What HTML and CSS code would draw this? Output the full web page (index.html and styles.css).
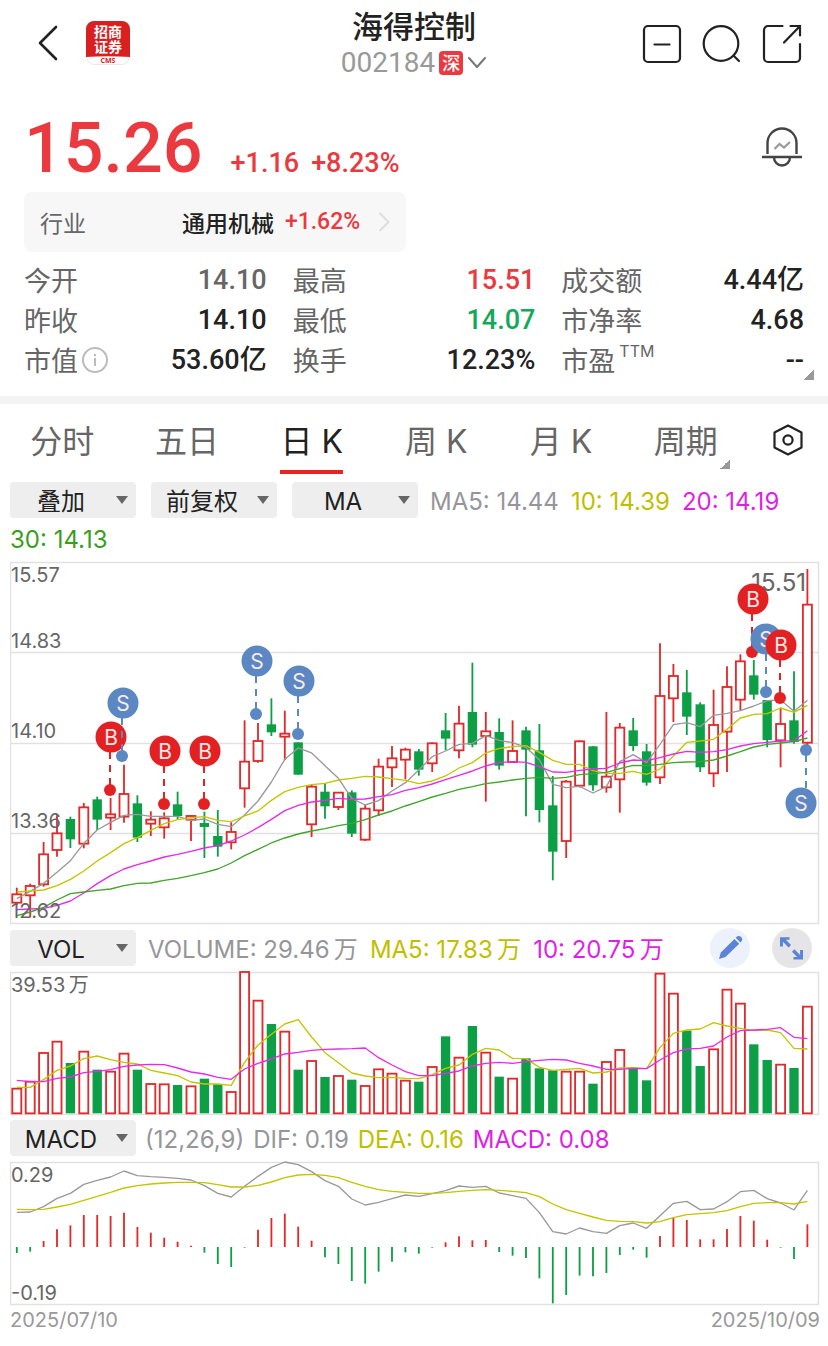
FILE: index.html
```html
<!DOCTYPE html>
<html lang="zh-CN">
<head>
<meta charset="utf-8">
<meta name="viewport" content="width=device-width, initial-scale=1">
<title>海得控制 002184</title>
<link rel="stylesheet" href="styles.css">
</head>
<body>
<header class="topbar">
  <div class="topbar-side">
    <button class="icon-btn back" aria-label="返回">
      <svg width="20" height="36" viewBox="0 0 20 36" fill="none" stroke="#222" stroke-width="2.6" stroke-linecap="round" stroke-linejoin="round"><path d="M18 2 2 18l16 16"/></svg>
    </button>
    <svg class="broker" width="44" height="44" viewBox="0 0 44 44" role="img" aria-label="招商证券">
      <rect x=".5" y=".5" width="43" height="43" rx="8" fill="#fff" stroke="#e6e6e6"/>
      <path d="M0 36V8a8 8 0 0 1 8-8h28a8 8 0 0 1 8 8v28Q22 34.500 0 36Z" fill="#d92021"/>
      <text class="broker-name" x="22" y="16">招商</text>
      <text class="broker-name" x="22" y="31">证券</text>
      <text class="broker-en" x="22" y="42">CMS</text>
    </svg>
  </div>
  <div class="topbar-title">
    <h1>海得控制</h1>
    <button class="code"><span>002184</span><span class="market">深</span><svg width="20" height="12" viewBox="0 0 20 12" fill="none" stroke="#777" stroke-width="2" stroke-linecap="round" stroke-linejoin="round"><path d="m2 1 8 9 8-9"/></svg></button>
  </div>
  <div class="topbar-side actions">
    <button class="icon-btn" aria-label="删除自选">
      <svg width="40" height="40" viewBox="0 0 40 40" fill="none" stroke="#222" stroke-width="2.200" stroke-linecap="round"><rect x="2" y="2" width="36" height="36" rx="4"/><path d="M12.500 20.500h15"/></svg>
    </button>
    <button class="icon-btn" aria-label="搜索">
      <svg width="40" height="40" viewBox="0 0 40 40" fill="none" stroke="#222" stroke-width="2.200" stroke-linecap="round"><circle cx="19" cy="19.500" r="17.300"/><path d="m31.500 31.500 5.500 5.500"/></svg>
    </button>
    <button class="icon-btn" aria-label="分享">
      <svg width="40" height="40" viewBox="0 0 40 40" fill="none" stroke="#222" stroke-width="2.200" stroke-linecap="round"><path d="M20.500 2H6a4 4 0 0 0-4 4v28a4 4 0 0 0 4 4h28a4 4 0 0 0 4-4V20"/><path d="M28.500 2H38v9.500M38 2 22 18.500"/></svg>
    </button>
  </div>
</header>

<main>
  <section class="quote">
    <div class="price-row">
      <strong class="price">15.26</strong>
      <span class="change">+1.16</span>
      <span class="change">+8.23%</span>
      <button class="icon-btn bell" aria-label="股价提醒">
        <svg width="40" height="40" viewBox="0 0 40 40" fill="none" stroke="#444" stroke-width="2.400"><path d="M5.500 27V16a14.500 14.500 0 0 1 29 0v11M0 30h40M12 30.500a8 8 0 0 0 16 0"/><path d="m12.500 22 5-5 4.500 3.500 6-5.500" stroke="#999" stroke-width="2.200"/></svg>
      </button>
    </div>
    <button class="industry">
      <span class="industry-label">行业</span>
      <span class="industry-name">通用机械</span>
      <span class="industry-change">+1.62%</span>
      <svg width="12" height="22" viewBox="0 0 12 22" fill="none" stroke="#ddd" stroke-width="2"><path d="m1.500 2 9 9-9 9"/></svg>
    </button>
    <dl class="stats">
      <div><dt>今开</dt><dd class="flat">14.10</dd></div>
      <div><dt>最高</dt><dd class="up">15.51</dd></div>
      <div><dt>成交额</dt><dd>4.44亿</dd></div>
      <div><dt>昨收</dt><dd>14.10</dd></div>
      <div><dt>最低</dt><dd class="down">14.07</dd></div>
      <div><dt>市净率</dt><dd>4.68</dd></div>
      <div><dt>市值<svg class="info" width="26" height="26" viewBox="0 0 26 26" fill="none" stroke="#bbb" stroke-width="2"><circle cx="13" cy="13" r="12"/><path d="M13 11v8M13 7v2.200"/></svg></dt><dd>53.60亿</dd></div>
      <div><dt>换手</dt><dd>12.23%</dd></div>
      <div class="more"><dt>市盈<sup>TTM</sup></dt><dd>--</dd></div>
    </dl>
  </section>

  <nav class="tabs">
    <button>分时</button>
    <button>五日</button>
    <button class="active">日 K</button>
    <button>周 K</button>
    <button>月 K</button>
    <button class="more">周期</button>
    <button class="icon-btn" aria-label="设置">
      <svg width="32" height="32" viewBox="0 0 32 32" fill="none" stroke="#222" stroke-width="2.200" stroke-linejoin="round"><path d="M16 1.500 29.500 8.500v15L16 30.500 2.500 23.500v-15Z"/><circle cx="16" cy="16" r="4.600"/></svg>
    </button>
  </nav>

  <section class="panel">
    <div class="toolbar">
      <label class="pick"><select aria-label="叠加"><option>叠加</option></select></label>
      <label class="pick"><select aria-label="复权"><option>前复权</option></select></label>
      <label class="pick"><select aria-label="均线"><option>MA</option></select></label>
      <span class="c-gray">MA5: 14.44</span>
      <span class="c-yellow">10: 14.39</span>
      <span class="c-pink">20: 14.19</span>
      <span class="c-green">30: 14.13</span>
    </div>
    <svg class="chart" id="price" viewBox="0 0 810 366" role="img" aria-label="日K线"></svg>
    <div class="toolbar tall">
      <label class="pick"><select aria-label="副图一"><option>VOL</option></select></label>
      <span class="c-gray">VOLUME: 29.46&thinsp;万</span>
      <span class="c-yellow">MA5: 17.83&thinsp;万</span>
      <span class="c-pink">10: 20.75&thinsp;万</span>
      <div class="round-actions">
        <button class="round pen" aria-label="画线">
          <svg width="40" height="40" viewBox="0 0 40 40" fill="#5b84d6"><path d="m9 31 1.800-6.500L24.500 11l4.700 4.700L15.500 29ZM25.700 9.800l.7-.7a3.300 3.300 0 0 1 4.700 4.700l-.7.7Z"/></svg>
        </button>
        <button class="round" aria-label="全屏">
          <svg width="40" height="40" viewBox="0 0 40 40" fill="#5b84d6"><path d="M8 9.200h9.500v2.600h-3.700l5.200 5.200-2.400 2.400-5.700-5.700v4.800H8ZM31 31.500h-9.500v-2.600h3.700L20 23.700l2.400-2.400 5.700 5.700v-5H31Z"/></svg>
        </button>
      </div>
    </div>
    <svg class="chart" id="volume" viewBox="0 0 810 148" role="img" aria-label="成交量"></svg>
    <div class="toolbar macd">
      <label class="pick"><select aria-label="副图二"><option>MACD</option></select></label>
      <span class="c-gray">(12,26,9)</span>
      <span class="c-gray">DIF: 0.19</span>
      <span class="c-yellow">DEA: 0.16</span>
      <span class="c-pink">MACD: 0.08</span>
    </div>
    <svg class="chart" id="macd" viewBox="0 0 810 148" role="img" aria-label="MACD"></svg>
    <div class="dates"><time>2025/07/10</time><time>2025/10/09</time></div>
  </section>
</main>
<script src="chart.js"></script>
</body>
</html>
```

FILE: styles.css
```css
* { box-sizing: border-box; }
body {
  margin: 0;
  background: #fff;
  color: #222;
  font-family: Inter, "Noto Sans CJK SC", sans-serif;
}
button {
  padding: 0;
  border: 0;
  background: none;
  color: inherit;
  font: inherit;
}
svg { display: block; }

/* top bar */
.topbar {
  display: grid;
  grid-template-columns: 1fr auto 1fr;
  align-items: center;
  height: 88px;
  padding: 0 26px 0 38px;
}
.topbar-side { display: flex; align-items: center; gap: 28px; padding-bottom: 2px; }
.actions { justify-content: flex-end; gap: 20px; padding-bottom: 0; }
.broker-name {
  fill: #fff;
  font: 700 14px "Noto Sans CJK SC", sans-serif;
  text-anchor: middle;
}
.broker-en {
  fill: #d92021;
  font: 700 7px "Open Sans", sans-serif;
  text-anchor: middle;
}
.topbar-title { display: flex; flex-direction: column; align-items: center; padding-right: 12px; }
h1 {
  margin: 0;
  font: 500 31px/38px "Noto Sans CJK SC", sans-serif;
}
.code {
  display: flex;
  align-items: center;
  gap: 4px;
  color: #999;
  font: 400 28px/38px Roboto, sans-serif;
}
.market {
  width: 24px;
  height: 24px;
  border-radius: 4px;
  background: #ea3a40;
  color: #fff;
  font: 500 18px/23px "Noto Sans CJK SC", sans-serif;
  text-align: center;
}

/* quote */
.quote { padding: 14px 24px; border-bottom: 8px solid #f3f3f3; }
.price-row { display: flex; align-items: baseline; height: 90px; color: #ea3a40; }
.price { margin-right: 28px; font: 500 70px/92px Roboto, sans-serif; }
.change { margin-right: 12px; font: 500 27px/36px Roboto, sans-serif; }
.bell { align-self: center; margin-left: auto; margin-right: 2px; }
.industry {
  display: flex;
  align-items: center;
  width: 49%;
  height: 60px;
  padding: 0 16px;
  border-radius: 8px;
  background: #f7f7f7;
  font: 400 23px/34px "Noto Sans CJK SC", sans-serif;
}
.industry-label { margin-right: auto; color: #666; }
.industry-name { font-weight: 500; }
.industry-change { margin: 0 18px 0 11px; color: #ea3a40; font: 500 23px/34px Roboto, sans-serif; }
.stats {
  display: grid;
  grid-template-columns: repeat(3, 1fr);
  column-gap: 26px;
  margin: 8px 0 2px;
}
.stats div { display: flex; justify-content: space-between; line-height: 40px; }
.stats dt {
  display: flex;
  align-items: center;
  gap: 4px;
  color: #666;
  font: 400 27px/40px "Noto Sans CJK SC", sans-serif;
}
.stats dd { margin: 0; font: 500 27px/40px Roboto, "Noto Sans CJK SC", sans-serif; }
.stats .flat { color: #666; }
.stats .up { color: #ea3a40; }
.stats .down { color: #14a85a; }
.stats sup { align-self: flex-start; font: 400 16px/22px Inter, sans-serif; }
.more { position: relative; }
.more::after {
  content: "";
  position: absolute;
  right: -10px;
  bottom: 0;
  width: 10px;
  height: 10px;
  background: linear-gradient(135deg, transparent 50%, #999 50%);
}

/* period tabs */
.tabs {
  display: grid;
  grid-template-columns: repeat(6, 1fr) 80px;
  justify-items: center;
  align-items: center;
  height: 72px;
  color: #666;
  font: 400 32px/64px Inter, "Noto Sans CJK SC", sans-serif;
}
.tabs button { margin-top: 4px; }
.tabs .icon-btn { margin-top: 0; }
.tabs .active { color: #222; box-shadow: inset 0 -4px #e92425; }
.tabs .more::after { right: -12px; bottom: 5px; }

/* indicator rows */
.panel { padding: 6px 8px 8px 10px; }
.toolbar {
  display: flex;
  flex-wrap: wrap;
  align-items: center;
  gap: 2px 12px;
  font: 400 24px/33px Inter, "Noto Sans CJK SC", sans-serif;
}
.toolbar span { padding-top: 3px; white-space: nowrap; }
.pick { position: relative; display: block; }
.pick + .pick { margin-left: 3px; }
.pick select {
  display: block;
  appearance: none;
  width: 126px;
  height: 36px;
  padding: 3px 24px 0 0;
  border: 0;
  border-radius: 4px;
  background: #eee;
  color: #222;
  font: 400 24px/33px Inter, "Noto Sans CJK SC", sans-serif;
  text-align: center;
  text-align-last: center;
}
.pick::after {
  content: "";
  position: absolute;
  right: 8px;
  top: 14px;
  border: solid transparent;
  border-width: 8px 6px 0;
  border-top-color: #666;
  pointer-events: none;
}
.tall { height: 40px; }
.macd { column-gap: 9px; }
.c-gray { color: #96969a; }
.c-yellow { color: #bfbf00; }
.c-pink { color: #e01fe6; }
.c-green { color: #3a9d20; }
.round-actions { display: flex; gap: 22px; margin: 0 8px 0 auto; }
.round { border-radius: 50%; background: #e5e5e7; }
.pen { background: #ecf1fb; }

/* charts */
.chart { width: 100%; height: auto; }
#price { margin: 4px 0 2px; }
#volume { margin: 2px 0; }
#macd { margin-top: 4px; }
.frame { fill: none; stroke: #e1e1e3; stroke-width: 1.5; }
.rise { fill: #fff; stroke: #e02a2b; stroke-width: 5.5; }
.fall { fill: #0d9f46; stroke: none; }
.wick-rise { stroke: #e02a2b; stroke-width: 5.5; }
.wick-fall { stroke: #0d9f46; stroke-width: 5.5; }
.line { fill: none; stroke-width: 4; stroke-linejoin: round; }
.l-gray { stroke: #99999c; }
.l-yellow { stroke: #c4c400; }
.l-pink { stroke: #e52bea; }
.l-green { stroke: #41a52a; }
.axis { fill: #666; font: 400 20px Inter, "Noto Sans CJK SC", sans-serif; }
.peak { fill: #666; font: 400 24px Inter, sans-serif; text-anchor: end; }
.mark-b { fill: #e32122; stroke: #e32122; }
.mark-s { fill: #5b87c3; stroke: #5b87c3; }
.mark circle { stroke: none; }
.mark line { stroke-width: 2; stroke-dasharray: 7 6; }
.mark text {
  fill: #fbe9e9;
  stroke: none;
  font: 400 21px Inter, sans-serif;
  text-anchor: middle;
}
.dates {
  display: flex;
  justify-content: space-between;
  color: #999;
  font: 400 20px/24px Inter, sans-serif;
}
```

FILE: chart.js
```js
// Plot units are thirds of a pixel; one trading day is 40.2 units wide.
const X0 = 50.4, STEP = 40.2;
const x = i => X0 + i * STEP;

// high, body top, body bottom, low, rising?
const days = [
[983,1003,1028,1035,1],[971,978,1006,1072,1],[846,883,973,980,1],[762,820,870,890,1],[770,777,838,864,0],
[729,742,851,865,1],[710,718,779,810,0],[714,763,773,810,1],[614,702,770,788,1],[706,730,833,846,0],
[754,779,791,828,1],[757,775,802,836,1],[695,733,768,777,0],[765,768,779,843,1],[755,789,801,894,0],
[750,828,860,890,0],[787,816,847,868,1],[481,605,685,743,1],[489,543,603,608,1],[415,493,517,528,0],
[452,521,530,600,1],[547,547,644,644,0],[675,680,793,831,1],[670,695,739,776,0],[697,698,741,750,1],
[691,697,821,831,0],[735,746,839,843,1],[596,620,751,768,1],[558,595,622,681,1],[563,569,599,658,1],
[567,574,629,647,0],[547,550,610,636,1],[459,511,536,571,0],[437,491,571,595,1],[308,456,554,562,0],
[456,514,528,725,1],[475,516,617,629,0],[481,573,606,608,1],[500,511,569,769,0],[492,571,750,787,0],
[648,736,875,961,0],[660,665,843,894,1],[541,544,677,682,1],[558,559,676,692,0],[456,650,682,698,1],
[489,503,658,758,1],[474,511,558,573,0],[552,574,668,677,0],[250,408,652,672,1],[312,348,415,486,1],
[330,397,470,525,0],[427,433,622,636,0],[389,495,640,681,1],[319,381,515,636,1],[283,304,419,452,1],
[300,346,404,419,0],[420,420,540,562,0],[443,492,541,622,1],[334,481,546,551,0],[27,134,548,556,1]];

const ma = {
gray: [1016,994,970,937,902,850,810,787,766,763,769,769,769,781,777,793,800,765,723,666,598,564,579,617,655,715,735,722,693,668,630,590,573,553,550,527,541,548,562,600,673,683,679,699,680,605,584,608,553,494,488,500,466,460,452,438,422,420,454,421],
yellow: [996,993,990,977,958,933,903,878,851,833,811,791,779,773,770,781,785,768,753,721,695,682,674,670,660,655,649,651,656,661,671,663,648,624,608,579,565,560,557,577,601,613,613,632,640,640,634,643,627,588,547,543,538,508,474,463,461,444,457,436],
pink: [1049,1047,1045,1036,1023,999,971,947,927,914,903,891,883,874,864,857,843,825,803,778,752,736,726,721,715,718,717,710,704,691,683,672,659,646,633,618,607,605,607,620,636,637,631,627,625,609,600,602,593,582,574,577,575,569,558,551,547,543,542,512],
green: [1067,1056,1042,1020,1001,996,991,987,977,970,969,961,955,947,938,927,909,887,868,849,834,822,813,806,797,790,779,765,753,738,725,711,700,688,680,671,666,660,655,652,655,652,644,641,637,626,616,617,613,608,606,605,600,588,575,561,553,549,545,534]
};

const vol = [491,470,384,350,414,380,434,440,386,434,477,478,480,484,461,478,501,141,227,297,320,434,408,456,453,464,483,433,446,467,470,426,334,398,303,383,455,461,400,430,436,440,440,476,411,375,431,466,146,206,317,423,373,194,236,358,405,419,429,245];
const volMa = {
yellow: [487,487,464,436,423,401,393,404,412,417,436,444,452,471,477,477,481,412,360,328,297,284,336,383,413,444,453,458,457,460,461,449,430,420,388,370,375,400,401,427,436,433,430,444,441,429,428,431,368,325,315,312,293,303,310,317,315,323,370,372],
pink: [466,470,470,460,456,443,439,434,424,420,418,419,429,441,447,457,463,432,415,402,387,382,376,373,372,371,369,398,420,440,452,452,445,438,423,415,412,415,410,406,403,405,415,423,433,433,430,431,405,383,372,370,363,336,317,315,313,308,337,341]
};

const ZERO = 396;
const hist = [414,410,378,343,331,300,300,303,293,336,353,368,380,392,413,447,456,398,344,309,296,335,377,427,447,498,506,470,440,412,416,398,382,364,376,375,411,422,429,490,565,540,482,484,474,420,404,428,363,307,315,373,373,342,303,317,374,398,432,328];
const macd = {
gray: [292,291,275,250,235,208,196,186,168,182,185,187,190,195,212,235,246,214,184,157,141,149,170,197,214,252,270,262,251,240,244,236,227,213,217,214,234,242,250,293,350,357,339,350,355,332,324,340,302,265,259,284,282,260,230,226,251,264,285,226],
yellow: [283,284,283,276,268,256,244,232,219,212,207,204,202,202,203,209,216,216,211,201,188,180,178,181,188,202,214,224,229,232,235,235,233,229,226,224,226,229,233,245,267,284,295,306,316,319,320,324,320,308,299,296,293,287,275,265,263,263,267,259]
};

// letter, badge x, badge y, dot x, dot y
const marks = [
['B',101,177,100,230],['S',113,143,112,196],['B',155,191,154,244],['B',195,191,194,244],
['S',247,101,246,154],['S',289,121,288,174],['B',743,39,742,92],['S',756,79,756,132],
['B',771,85,770,138],['S',791,243,796,190]];

const lines = set => Object.entries(set).map(([name, ys]) =>
  `<polyline class="line l-${name}" points="${ys.map((y, i) => x(i).toFixed(1) + ',' + y).join(' ')}"/>`).join('');
const plot = (top, body) => `<g transform="scale(.33333) translate(-30 ${-top})">${body}</g>`;
const box = (i, top, bottom, up) => up
  ? `<rect class="rise" x="${x(i) - 13.5}" y="${top}" width="27" height="${bottom - top}"/>`
  : `<rect class="fall" x="${x(i) - 14}" y="${top}" width="28" height="${bottom - top}"/>`;
const stick = (i, from, to, up) =>
  `<line class="wick-${up ? 'rise' : 'fall'}" x1="${x(i)}" x2="${x(i)}" y1="${from}" y2="${to}"/>`;
const label = (y, text) => `<text class="axis" x="1" y="${y}">${text}</text>`;

document.getElementById('price').innerHTML =
  '<path class="frame" d="M.5 2.500h808v361H.5ZM.5 92.500h808M.5 183.500h808M.5 273.500h808"/>' +
  plot(0, days.map(([h, t, b, l, up], i) => stick(i, h, l, up) + box(i, t, b, up)).join('') + lines(ma)) +
  label(22, '15.57') + label(88, '14.83') + label(178, '14.10') + label(268, '13.36') + label(358, '12.62') +
  '<text class="peak" x="796" y="31">15.51</text>' +
  marks.map(([k, bx, by, dx, dy]) => `<g class="mark mark-${k.toLowerCase()}">
    <line x1="${dx}" x2="${dx}" y1="${by + (dy > by ? 15 : -15)}" y2="${dy}"/>
    <circle cx="${bx}" cy="${by}" r="15.5"/><circle cx="${dx}" cy="${dy}" r="6"/>
    <text x="${bx}" y="${by + 8}">${k}</text></g>`).join('');

document.getElementById('volume').innerHTML =
  '<path class="frame" d="M.5 2.500h808v142H.5Z"/>' +
  plot(135, vol.map((y, i) => box(i, y, 565, days[i][4])).join('') + lines(volMa)) +
  label(22, '39.53\u2009万');

document.getElementById('macd').innerHTML =
  '<path class="frame" d="M.5 2.500h808v142H.5Z"/>' +
  plot(135, hist.map((y, i) => stick(i, ZERO, y, y < ZERO)).join('') + lines(macd)) +
  label(22, '0.29') + label(140, '-0.19');
```
